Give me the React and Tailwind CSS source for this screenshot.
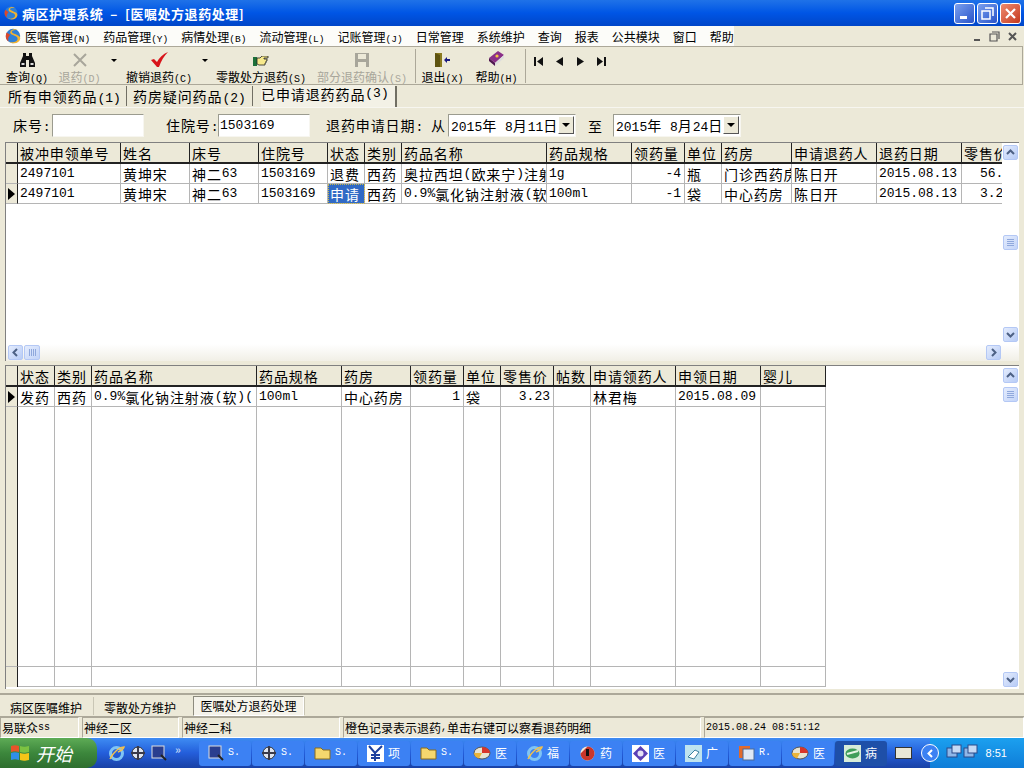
import React from 'react';

const BEIGE = 'bg-[#ece9d8]';
const MONO = "font-['Liberation_Mono','Noto_Sans_CJK_SC',monospace]";

// CJK and half-width runs have different widths in the original bitmap font
const Mixed = ({ text, cjk = 'text-[14px] tracking-[0.9px]', latin = 'text-[13px]' }) => (
  <>
    {text.split(/([\x00-\x7f]+)/).filter(Boolean).map((part, i) =>
      /^[\x00-\x7f]+$/.test(part) ? (
        <span key={i} className={`${MONO} ${latin}`}>{part}</span>
      ) : (
        <span key={i} className={cjk}>{part}</span>
      )
    )}
  </>
);

const topCols = [
  { w: 'w-[103px]', t: '被冲申领单号' },
  { w: 'w-[69px]', t: '姓名' },
  { w: 'w-[69px]', t: '床号' },
  { w: 'w-[69px]', t: '住院号' },
  { w: 'w-[37px]', t: '状态' },
  { w: 'w-[37px]', t: '类别' },
  { w: 'w-[145px]', t: '药品名称' },
  { w: 'w-[85px]', t: '药品规格' },
  { w: 'w-[53px]', t: '领药量', right: true },
  { w: 'w-[37px]', t: '单位' },
  { w: 'w-[70px]', t: '药房' },
  { w: 'w-[85px]', t: '申请退药人' },
  { w: 'w-[85px]', t: '退药日期' },
  { w: 'w-[53px]', t: '零售价', clip: true },
];

const topRows = [
  ['2497101', '黄坤宋', '神二63', '1503169', '退费', '西药', '奥拉西坦(欧来宁)注射', '1g', '-4', '瓶', '门诊西药房', '陈日开', '2015.08.13', '56.'],
  ['2497101', '黄坤宋', '神二63', '1503169', '申请', '西药', '0.9%氯化钠注射液(软)', '100ml', '-1', '袋', '中心药房', '陈日开', '2015.08.13', '3.23'],
];

const bottomCols = [
  { w: 'w-[37px]', t: '状态' },
  { w: 'w-[37px]', t: '类别' },
  { w: 'w-[165px]', t: '药品名称' },
  { w: 'w-[85px]', t: '药品规格' },
  { w: 'w-[69px]', t: '药房' },
  { w: 'w-[53px]', t: '领药量', right: true },
  { w: 'w-[37px]', t: '单位' },
  { w: 'w-[53px]', t: '零售价', right: true },
  { w: 'w-[37px]', t: '帖数' },
  { w: 'w-[85px]', t: '申请领药人' },
  { w: 'w-[85px]', t: '申领日期' },
  { w: 'w-[65px]', t: '婴儿' },
];

const bottomRow = ['发药', '西药', '0.9%氯化钠注射液(软)(', '100ml', '中心药房', '1', '袋', '3.23', '', '林君梅', '2015.08.09', ''];

const menus = ['医嘱管理(N)', '药品管理(Y)', '病情处理(B)', '流动管理(L)', '记账管理(J)', '日常管理', '系统维护', '查询', '报表', '公共模块', '窗口', '帮助'];

const Logo = ({ size = 20 }) => (
  <svg width={size} height={size} viewBox="0 0 20 20">
    <circle cx="10" cy="10" r="8" fill="#2f7fd6" />
    <path d="M15 3C9 1 5 5 8 8c3 2 8 2 7 6-1 3-6 4-10 2 5 4 12 2 13-3 1-4-7-5-9-7-1-2 2-3 6-3z" fill="#f2b230" />
    <path d="M3 6c-2 4-1 8 2 10-1-3 0-5 2-7z" fill="#d9472b" />
  </svg>
);

const Binoculars = () => (
  <svg width="17" height="14" viewBox="0 0 17 14">
    <path d="M4 0h3v3h3V0h3v3l3 7v4H10V7H7v7H1v-4l3-7z" fill="#111" />
    <rect x="2.5" y="10" width="3" height="2" fill="#ddd" />
    <rect x="11.5" y="10" width="3" height="2" fill="#ddd" />
  </svg>
);
const CrossIcon = () => (
  <svg width="14" height="14" viewBox="0 0 14 14">
    <path d="M1 1l12 12M13 1L1 13" stroke="#a8a69b" strokeWidth="2" />
  </svg>
);
const CheckIcon = () => (
  <svg width="17" height="15" viewBox="0 0 17 15">
    <path d="M0 8l3-1 3 3c2-4 6-8 11-10-4 4-7 9-9 15H6z" fill="#d8141a" />
  </svg>
);
const HandIcon = () => (
  <svg width="16" height="11" viewBox="0 0 16 11">
    <rect x="0" y="1" width="4" height="9" fill="#1d6f3a" />
    <path d="M4 2h3l2-2h6v2h-4v1h3v2h-1v2h-1v2H6L4 8z" fill="#f7e98c" stroke="#222" strokeWidth="0.8" />
  </svg>
);
const DiskIcon = () => (
  <svg width="14" height="14" viewBox="0 0 14 14">
    <rect width="14" height="14" fill="#a8a69b" />
    <rect x="3" y="1" width="8" height="5" fill="#ece9d8" />
    <rect x="3" y="9" width="8" height="5" fill="#ece9d8" />
  </svg>
);
const DoorIcon = () => (
  <svg width="15" height="14" viewBox="0 0 15 14">
    <path d="M0 0h7v14H0z" fill="#8a7a1f" />
    <path d="M0 0l5 2v12H0z" fill="#5d5310" />
    <path d="M9 7l3-3v2h3v2h-3v2z" fill="#1a1a80" />
  </svg>
);
const BookIcon = () => (
  <svg width="17" height="17" viewBox="0 0 17 17">
    <path d="M1 8l9-7 6 4-9 8z" fill="#8a2f88" />
    <path d="M1 8l6 5v3l-6-5z" fill="#4f1650" />
    <path d="M7 13l9-8v3l-9 8z" fill="#ddd" />
    <circle cx="9" cy="6" r="1.6" fill="#f5c542" />
  </svg>
);

const ToolButton = ({ icon, label, w, disabled }) => (
  <div className={`${w} flex flex-col items-center shrink-0`}>
    <div className="h-[18px] flex items-end justify-center">{icon}</div>
    <div className={`h-[17px] leading-[17px] whitespace-nowrap ${disabled ? 'text-[#a8a69b]' : 'text-black'}`}>
      <Mixed text={label} cjk="text-[12px]" latin="text-[10px]" />
    </div>
  </div>
);

const Caret = ({ className = '' }) => (
  <div className={`w-0 h-0 border-l-[3px] border-r-[3px] border-t-[3px] border-l-transparent border-r-transparent border-t-black ${className}`} />
);

const NavIcon = ({ type }) => (
  <svg width="9" height="9" viewBox="0 0 9 9">
    {type === 'first' && <path d="M0 0h2v9H0zM9 0v9L3 4.5z" fill="#111" />}
    {type === 'prev' && <path d="M8 0v9L1 4.5z" fill="#111" />}
    {type === 'next' && <path d="M1 0v9l7-4.5z" fill="#111" />}
    {type === 'last' && <path d="M7 0h2v9H7zM0 0v9l6-4.5z" fill="#111" />}
  </svg>
);

const Chevron = ({ dir }) => {
  const paths = { up: 'M1 6l3.5-3.5L8 6', down: 'M1 3l3.5 3.5L8 3', left: 'M6 1L2.5 4.5 6 8', right: 'M3 1l3.5 3.5L3 8' };
  return (
    <svg width="9" height="9" viewBox="0 0 9 9">
      <path d={paths[dir]} fill="none" stroke="#4d6185" strokeWidth="2" />
    </svg>
  );
};

const ScrollBtn = ({ dir, className = '' }) => (
  <div className={`w-[15px] h-[15px] shrink-0 flex items-center justify-center rounded-[2px] border border-[#b4c8f5] bg-gradient-to-br from-[#e4ecfd] to-[#b8ccf6] ${className}`}>
    <Chevron dir={dir} />
  </div>
);

const Thumb = ({ vertical }) => (
  <div className={`shrink-0 flex items-center justify-center rounded-[2px] border border-[#b4c8f5] bg-gradient-to-br from-[#e4ecfd] to-[#c3d4f8] ${vertical ? 'w-[15px] h-[15px] flex-col gap-[1px]' : 'w-[16px] h-[15px] gap-[1px]'}`}>
    {[0, 1, 2, 3].map((n) => (
      <div key={n} className={`bg-[#8fa8dc] ${vertical ? 'w-[7px] h-[1px]' : 'w-[1px] h-[7px]'}`} />
    ))}
  </div>
);

const HeaderCell = ({ w, children }) => (
  <div className={`${w} shrink-0 h-[21px] ${BEIGE} border-r border-r-[#222] border-b-2 border-b-[#222] pl-[2px] flex items-center overflow-hidden whitespace-nowrap leading-none`}>
    {children}
  </div>
);

const Cell = ({ w, right, clip, selected, indent, children }) => (
  <div className={`${w} shrink-0 h-[20px] border-r border-b border-[#b5b5b5] flex items-center overflow-hidden whitespace-nowrap leading-none ${right ? 'justify-end pr-[3px]' : clip ? 'pl-[18px]' : 'pl-[2px]'} ${selected ? 'bg-[#316ac5] text-white outline-1 outline-dotted outline-offset-[-1px] outline-[#c9b84a]' : 'text-black'}`}>
    {children}
  </div>
);

const RowMark = ({ active, header }) => (
  <div className={`w-[12px] shrink-0 ${header ? 'h-[21px] border-b-2 border-b-[#222]' : 'h-[20px] border-b border-b-[#b5b5b5]'} ${BEIGE} border-r border-r-[#222] flex items-center justify-center`}>
    {active && <div className="w-0 h-0 border-t-[6px] border-b-[6px] border-l-[7px] border-t-transparent border-b-transparent border-l-black" />}
  </div>
);

const TopGrid = () => (
  <div className="h-[219px] mx-[5px] border-t border-l border-[#808080] bg-white flex flex-col shrink-0">
    <div className="flex-1 flex min-h-0">
      <div className="flex-1 min-w-0 overflow-hidden">
        <div className="flex w-max">
          <RowMark header />
          {topCols.map((c) => (
            <HeaderCell key={c.t} w={c.w}><Mixed text={c.t} /></HeaderCell>
          ))}
        </div>
        {topRows.map((row, r) => (
          <div key={r} className="flex w-max">
            <RowMark active={r === 1} />
            {row.map((v, i) => (
              <Cell key={i} w={topCols[i].w} right={topCols[i].right} clip={topCols[i].clip} selected={r === 1 && i === 4}>
                <Mixed text={v} />
              </Cell>
            ))}
          </div>
        ))}
      </div>
      <div className="w-[17px] shrink-0 flex flex-col items-center pt-[2px] pb-[2px] bg-white">
        <ScrollBtn dir="up" />
        <div className="flex-1 flex flex-col items-center justify-start pt-[75px]">
          <Thumb vertical />
        </div>
        <ScrollBtn dir="down" />
      </div>
    </div>
    <div className="h-[17px] shrink-0 flex items-center pl-[2px] pr-[18px] bg-gradient-to-b from-white to-[#f1efe6]">
      <ScrollBtn dir="left" />
      <div className="w-[1px]" />
      <Thumb />
      <div className="flex-1" />
      <ScrollBtn dir="right" />
    </div>
  </div>
);

const BottomGrid = () => (
  <div className="h-[324px] mt-[4px] mx-[5px] border-t border-l border-[#808080] bg-white flex shrink-0">
    <div className="flex-1 min-w-0 overflow-hidden flex flex-col">
      <div className="flex w-max">
        <RowMark header />
        {bottomCols.map((c) => (
          <HeaderCell key={c.t} w={c.w}><Mixed text={c.t} /></HeaderCell>
        ))}
      </div>
      <div className="flex w-max">
        <RowMark active />
        {bottomRow.map((v, i) => (
          <Cell key={i} w={bottomCols[i].w} right={bottomCols[i].right}>
            <Mixed text={v} />
          </Cell>
        ))}
      </div>
      <div className="flex w-max h-[260px]">
        <div className={`w-[12px] shrink-0 ${BEIGE} border-r border-r-[#222] border-b border-b-[#b5b5b5]`} />
        {bottomCols.map((c) => (
          <div key={c.t} className={`${c.w} shrink-0 border-r border-b border-[#b5b5b5]`} />
        ))}
      </div>
      <div className="flex w-max h-[20px]">
        <div className={`w-[12px] shrink-0 ${BEIGE} border-r border-r-[#222]`} />
        {bottomCols.map((c) => (
          <div key={c.t} className={`${c.w} shrink-0 border-r border-b border-[#b5b5b5]`} />
        ))}
      </div>
    </div>
    <div className="w-[17px] shrink-0 flex flex-col items-center pt-[2px] pb-[2px] bg-white">
      <ScrollBtn dir="up" />
      <div className="flex-1 flex flex-col items-center pt-[4px]">
        <Thumb vertical />
      </div>
      <ScrollBtn dir="down" />
    </div>
  </div>
);

const Sunken = ({ className = '', children }) => (
  <div className={`h-[23px] bg-white border border-t-[#9b9b8f] border-l-[#9b9b8f] border-r-[#f7f6f0] border-b-[#f7f6f0] shrink-0 flex items-center whitespace-nowrap leading-none ${className}`}>
    {children}
  </div>
);

const DateBox = ({ value, w }) => (
  <Sunken className={`${w} pl-[2px] justify-between`}>
    <span><Mixed text={value} /></span>
    <div className={`w-[16px] h-[18px] mr-[1px] ${BEIGE} border border-t-white border-l-white border-r-[#555] border-b-[#555] flex items-center justify-center`}>
      <div className="w-0 h-0 border-l-[4px] border-r-[4px] border-t-[4px] border-l-transparent border-r-transparent border-t-black" />
    </div>
  </Sunken>
);

const TaskIcon = ({ kind }) => {
  if (kind === 'ie') {
    return (
      <svg width="17" height="17" viewBox="0 0 17 17">
        <circle cx="8.5" cy="8.5" r="6" fill="none" stroke="#7fc4f5" strokeWidth="3" />
        <path d="M2 14C6 6 12 2 16 2c-1 3-4 4-6 5" fill="none" stroke="#f2c14e" strokeWidth="1.5" />
      </svg>
    );
  }
  if (kind === 'folder') {
    return (
      <svg width="17" height="14" viewBox="0 0 17 14">
        <path d="M1 2h6l2 2h7v9H1z" fill="#f5d76e" stroke="#8b6d1d" />
      </svg>
    );
  }
  if (kind === 'pie') {
    return (
      <svg width="18" height="14" viewBox="0 0 18 14">
        <ellipse cx="9" cy="7" rx="8" ry="6" fill="#e8e3d0" stroke="#555" />
        <path d="M9 7V1a8 6 0 0 1 8 6z" fill="#d8352a" />
        <path d="M9 7H1a8 6 0 0 0 5 5.5z" fill="#e9b43a" />
      </svg>
    );
  }
  if (kind === 'scan') {
    return (
      <svg width="16" height="16" viewBox="0 0 16 16">
        <rect x="1" y="1" width="12" height="12" fill="#2a3e8f" stroke="#ddd" />
        <path d="M10 10l5 5" stroke="#222" strokeWidth="2" />
      </svg>
    );
  }
  if (kind === 'gear') {
    return (
      <svg width="16" height="16" viewBox="0 0 16 16">
        <circle cx="8" cy="8" r="6" fill="#dfe4ef" stroke="#333" />
        <path d="M8 1v14M1 8h14" stroke="#3a3a4a" strokeWidth="2" />
      </svg>
    );
  }
  if (kind === 'yen') {
    return (
      <svg width="17" height="17" viewBox="0 0 17 17">
        <rect width="17" height="17" fill="#fff" />
        <path d="M2 1l6 7 7-7M8 8v8M4 10h9M4 13h9" stroke="#1c3f9e" strokeWidth="2" fill="none" />
      </svg>
    );
  }
  if (kind === 'red') {
    return (
      <svg width="17" height="17" viewBox="0 0 17 17">
        <circle cx="8.5" cy="8.5" r="7" fill="#f3e7d7" />
        <path d="M8.5 1.5a7 7 0 0 1 0 14 7 7 0 0 1-7-7" fill="#c9362b" />
        <rect x="7" y="4" width="3" height="7" fill="#111" />
      </svg>
    );
  }
  if (kind === 'gem') {
    return (
      <svg width="17" height="17" viewBox="0 0 17 17">
        <rect width="17" height="17" fill="#fff" />
        <path d="M8.5 1L16 8.5 8.5 16 1 8.5z" fill="#5a3fb5" />
        <circle cx="8.5" cy="8.5" r="3" fill="#e5e1f5" />
      </svg>
    );
  }
  if (kind === 'tool') {
    return (
      <svg width="17" height="17" viewBox="0 0 17 17">
        <rect width="17" height="17" fill="#bfe3ef" />
        <path d="M3 12l7-7 4 2-5 7z" fill="#fff" stroke="#3a7f9e" />
      </svg>
    );
  }
  if (kind === 'r') {
    return (
      <svg width="17" height="17" viewBox="0 0 17 17">
        <rect x="1" y="1" width="11" height="12" fill="#e26a2c" />
        <rect x="5" y="4" width="11" height="11" fill="#dfe8f5" stroke="#4c6a95" />
      </svg>
    );
  }
  return (
    <svg width="17" height="17" viewBox="0 0 17 17">
      <rect width="17" height="17" fill="#d7ecd9" />
      <ellipse cx="8.5" cy="8.5" rx="7" ry="5" fill="#3f9e5a" />
      <path d="M3 9l11-3" stroke="#e5f5e5" strokeWidth="2" />
    </svg>
  );
};

const tasks = [
  { k: 'scan', t: 'S.' }, { k: 'gear', t: 'S.' }, { k: 'folder', t: 'S.' }, { k: 'yen', t: '项' }, { k: 'folder', t: 'S.' },
  { k: 'pie', t: '医' }, { k: 'ie', t: '福' }, { k: 'red', t: '药' }, { k: 'gem', t: '医' }, { k: 'tool', t: '广' }, { k: 'r', t: 'R.' }, { k: 'pie', t: '医' },
  { k: 'green', t: '病', active: true },
];

export default function App() {
  return (
    <div className={`w-[1024px] h-[768px] overflow-hidden flex flex-col ${BEIGE} text-black font-['Noto_Sans_CJK_SC',sans-serif]`}>
      {/* title bar */}
      <div className="h-[26px] shrink-0 flex items-center pl-[3px] pr-[3px] bg-gradient-to-b from-[#1f72e8] via-[#0055e5] to-[#0046c8]">
        <Logo size={16} />
        <div className="ml-[3px] text-white font-bold text-[13px] leading-none whitespace-nowrap tracking-[0.55px]">
          病区护理系统 &nbsp;–&nbsp; [医嘱处方退药处理]
        </div>
        <div className="ml-auto flex gap-[2px]">
          <div className="w-[21px] h-[21px] rounded-[3px] border border-white bg-gradient-to-br from-[#7ba0ee] to-[#2a52c9] flex items-end pl-[5px] pb-[4px]">
            <div className="w-[7px] h-[3px] bg-white" />
          </div>
          <div className="w-[21px] h-[21px] rounded-[3px] border border-white bg-gradient-to-br from-[#7ba0ee] to-[#2a52c9] flex items-center justify-center">
            <svg width="13" height="13" viewBox="0 0 13 13">
              <path d="M4 1h8v8M1 4h8v8H1z" fill="none" stroke="#fff" strokeWidth="1.5" />
            </svg>
          </div>
          <div className="w-[21px] h-[21px] rounded-[3px] border border-white bg-gradient-to-br from-[#ee8a6e] to-[#c4361a] flex items-center justify-center">
            <svg width="13" height="13" viewBox="0 0 13 13">
              <path d="M2 2l9 9M11 2l-9 9" stroke="#fff" strokeWidth="2.2" />
            </svg>
          </div>
        </div>
      </div>

      {/* menu bar */}
      <div className={`h-[20px] shrink-0 flex items-center ${BEIGE}`}>
        <div className="w-[734px] h-full bg-[#fcfcf9] flex items-center pl-[4px]">
          <Logo size={18} />
          <div className="ml-[3px] flex gap-[13px] whitespace-nowrap leading-none">
            {menus.map((m) => (
              <span key={m}><Mixed text={m} cjk="text-[12px]" latin="text-[9.5px]" /></span>
            ))}
          </div>
        </div>
        <div className="ml-auto pr-[5px] flex gap-[3px] items-center">
          <div className="w-[13px] h-[13px] flex items-end justify-center pb-[2px]"><div className="w-[6px] h-[2px] bg-[#555]" /></div>
          <svg width="13" height="13" viewBox="0 0 13 13" className="ml-[2px]">
            <path d="M4 2h7v7M2 4h7v7H2z" fill="none" stroke="#555" strokeWidth="1.2" />
          </svg>
          <svg width="13" height="13" viewBox="0 0 13 13" className="ml-[2px]">
            <path d="M3 3l7 7M10 3l-7 7" stroke="#555" strokeWidth="2" />
          </svg>
        </div>
      </div>

      {/* toolbar */}
      <div className="h-[39px] shrink-0 mx-0 mr-[1px] border-t border-b border-r border-[#aca899] flex items-center pt-[1px]">
        <ToolButton w="w-[40px] ml-[7px]" icon={<Binoculars />} label="查询(Q)" />
        <ToolButton w="w-[41px] ml-[12px]" icon={<CrossIcon />} label="退药(D)" disabled />
        <Caret className="ml-[11px] mb-[12px] border-t-[#a8a69b]" />
        <ToolButton w="w-[64px] ml-[10px]" icon={<CheckIcon />} label="撤销退药(C)" />
        <Caret className="ml-[11px] mb-[12px]" />
        <ToolButton w="w-[88px] ml-[9px]" icon={<HandIcon />} label="零散处方退药(S)" />
        <ToolButton w="w-[88px] ml-[13px]" icon={<DiskIcon />} label="部分退药确认(S)" disabled />
        <div className="w-[1px] h-[34px] ml-[9px] bg-[#aca899]" />
        <ToolButton w="w-[41px] ml-[6px]" icon={<DoorIcon />} label="退出(X)" />
        <ToolButton w="w-[41px] ml-[13px]" icon={<BookIcon />} label="帮助(H)" />
        <div className="w-[1px] h-[34px] ml-[8px] bg-[#aca899]" />
        <div className="ml-[8px] mb-[9px] flex gap-[12px]">
          <NavIcon type="first" />
          <NavIcon type="prev" />
          <NavIcon type="next" />
          <NavIcon type="last" />
        </div>
      </div>

      {/* page tabs */}
      <div className="h-[23px] shrink-0 flex items-center border-b border-[#f7f6f0] whitespace-nowrap leading-none">
        <div className="ml-[8px] w-[118px]"><Mixed text="所有申领药品(1)" /></div>
        <div className="w-[1px] h-[20px] bg-[#716f64]" />
        <div className="ml-[6px] w-[119px]"><Mixed text="药房疑问药品(2)" /></div>
        <div className="w-[1px] h-[20px] bg-[#716f64]" />
        <div className="ml-[8px] w-[134px] h-full flex items-start pt-[2px] bg-[#f3f1e6]"><Mixed text="已申请退药药品(3)" /></div>
        <div className="w-[2px] h-[21px] bg-[#716f64]" />
      </div>

      {/* filter row */}
      <div className="h-[34px] shrink-0 flex items-center whitespace-nowrap leading-none">
        <span className="ml-[13px] w-[39px]"><Mixed text="床号:" /></span>
        <Sunken className="w-[92px]" />
        <span className="ml-[22px] w-[52px]"><Mixed text="住院号:" /></span>
        <Sunken className="w-[92px] pl-[1px]"><Mixed text="1503169" /></Sunken>
        <span className="ml-[16px] w-[122px]"><Mixed text="退药申请日期: 从" /></span>
        <DateBox w="w-[128px]" value="2015年 8月11日" />
        <span className="ml-[12px] w-[25px]"><Mixed text="至" /></span>
        <DateBox w="w-[128px]" value="2015年 8月24日" />
      </div>

      <TopGrid />
      <BottomGrid />

      {/* window tabs */}
      <div className="h-[24px] mt-[4px] shrink-0 border-t-2 border-b border-[#aca899] flex items-center whitespace-nowrap leading-none">
        <div className="ml-[10px] w-[83px]"><Mixed text="病区医嘱维护" cjk="text-[12px]" /></div>
        <div className="w-[1px] h-[18px] bg-[#c9c6b5]" />
        <div className="ml-[10px] w-[89px]"><Mixed text="零散处方维护" cjk="text-[12px]" /></div>
        <div className="w-[111px] h-[20px] border border-t-[#8d8b7e] border-l-[#8d8b7e] border-r-white border-b-white bg-[#f5f3ea] flex items-center justify-center">
          <Mixed text="医嘱处方退药处理" cjk="text-[12px]" />
        </div>
        <div className="w-[1px] h-[18px] bg-[#c9c6b5]" />
      </div>

      {/* status bar */}
      <div className="h-[21px] shrink-0 flex gap-[3px] whitespace-nowrap leading-none">
        {[
          { w: 'w-[79px]', t: '易联众ss' },
          { w: 'w-[97px]', t: '神经二区' },
          { w: 'w-[158px]', t: '神经二科' },
          { w: 'w-[358px]', t: '橙色记录表示退药, 单击右键可以察看退药明细' },
          { w: 'flex-1', t: '2015.08.24 08:51:12' },
        ].map((s) => (
          <div key={s.t} className={`${s.w} border border-t-[#aca899] border-l-[#aca899] border-r-white border-b-white flex items-center pl-[1px] overflow-hidden`}>
            <Mixed text={s.t} cjk="text-[12px]" latin="text-[10px]" />
          </div>
        ))}
      </div>

      {/* taskbar */}
      <div className="h-[30px] shrink-0 flex items-center bg-gradient-to-b from-[#3f8cf3] via-[#245edb] to-[#1941a5] text-white whitespace-nowrap leading-none">
        <div className="w-[97px] h-full rounded-r-[10px] bg-gradient-to-b from-[#5eac56] via-[#3c873c] to-[#2e6e2e] flex items-center pl-[10px] gap-[6px]">
          <svg width="20" height="18" viewBox="0 0 20 18">
            <path d="M1 2c3-1 5-1 8 0v6c-3-1-5-1-8 0z" fill="#e8542a" />
            <path d="M10 2c3 1 5 1 9 0v6c-4 1-6 1-9 0z" fill="#7cc242" />
            <path d="M1 9c3-1 5-1 8 0v7c-3-1-5-1-8 0z" fill="#2f8fe8" />
            <path d="M10 9c3 1 5 1 9 0v7c-4 1-6 1-9 0z" fill="#f5c518" />
          </svg>
          <span className="italic text-[18px]">开始</span>
        </div>
        <div className="ml-[11px] w-[80px] flex items-center gap-[5px]">
          <TaskIcon kind="ie" />
          <TaskIcon kind="gear" />
          <TaskIcon kind="scan" />
          <span className="text-[11px] font-bold text-[#bcd0f5] ml-[3px] mb-[8px]">»</span>
        </div>
        <div className="ml-[11px] flex gap-[1px]">
          {tasks.map((t, i) => (
            <div key={i} className={`w-[52px] h-[25px] rounded-[3px] flex items-center pl-[9px] gap-[4px] ${t.active ? 'bg-[#1e4fa8]' : 'bg-[#3c81f3]'}`}>
              <TaskIcon kind={t.k} />
              <Mixed text={t.t} cjk="text-[12px]" latin="text-[10px]" />
            </div>
          ))}
        </div>
        <div className="ml-[8px] w-[17px] h-[12px] bg-[#e9e6d6] border border-[#333] shrink-0" />
        <div className="ml-auto w-[94px] h-full bg-gradient-to-b from-[#1ca0ef] to-[#0f7dd8] flex items-center pr-[17px] justify-between">
          <div className="w-[18px] h-[18px] -ml-[9px] rounded-full bg-[#3c81f3] border border-white flex items-center justify-center">
            <svg width="9" height="9" viewBox="0 0 9 9"><path d="M6 1L2.5 4.5 6 8" fill="none" stroke="#fff" strokeWidth="2" /></svg>
          </div>
          <svg width="32" height="18" viewBox="0 0 32 18">
            <rect x="1" y="4" width="10" height="9" fill="#8fb7e8" stroke="#2a4a8a" />
            <rect x="6" y="1" width="9" height="8" fill="#c5daf5" stroke="#2a4a8a" />
            <rect x="18" y="4" width="10" height="9" fill="#8fb7e8" stroke="#2a4a8a" />
            <rect x="22" y="1" width="9" height="8" fill="#c5daf5" stroke="#2a4a8a" />
          </svg>
          <span className="text-[11px] font-['Liberation_Sans',sans-serif]">8:51</span>
        </div>
      </div>
    </div>
  );
}
